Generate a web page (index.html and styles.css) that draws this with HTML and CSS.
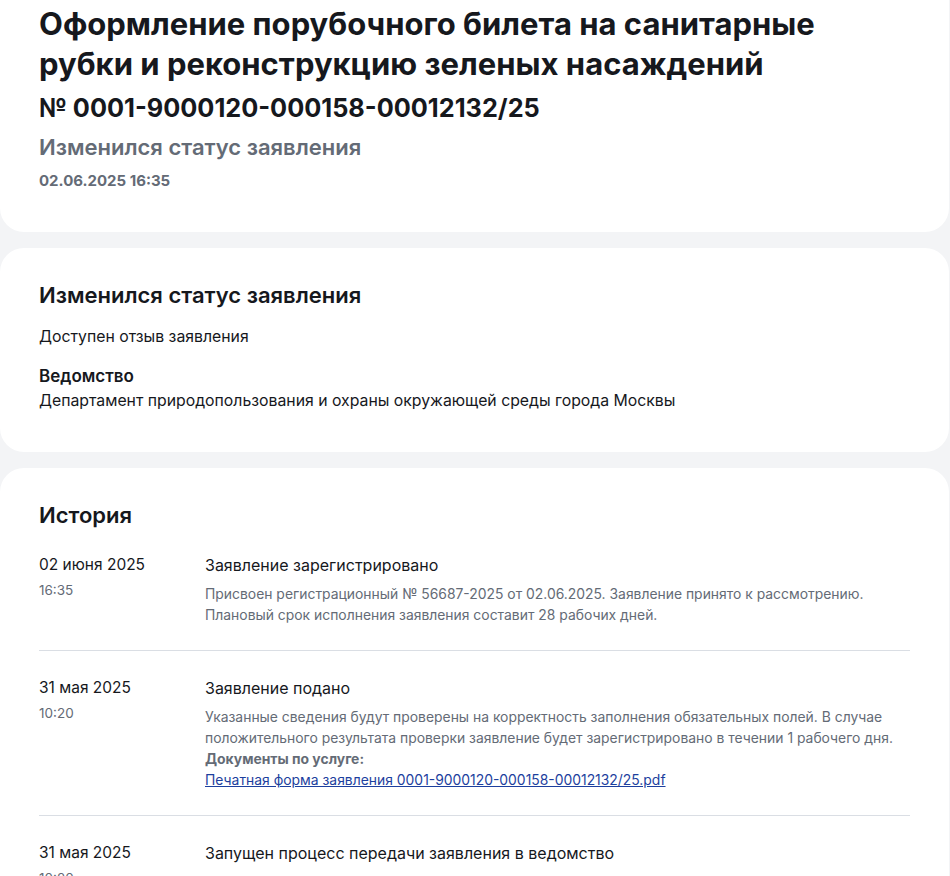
FILE: index.html
```html
<!DOCTYPE html>
<html lang="ru">
<head>
    <meta charset="UTF-8">
    <meta name="viewport" content="width=device-width, initial-scale=1.0">
    <title>Порубочный билет</title>
    <link rel="stylesheet" href="styles.css">
</head>
<body>
    <!-- Header card -->
    <section class="card card-head">
        <h1 class="title">Оформление порубочного билета на санитарные рубки и реконструкцию зеленых насаждений</h1>
        <div class="number">№ 0001-9000120-000158-00012132/25</div>
        <div class="status">Изменился статус заявления</div>
        <div class="stamp">02.06.2025 16:35</div>
    </section>

    <!-- Current status -->
    <section class="card card-status">
        <h2 class="card-title">Изменился статус заявления</h2>
        <p class="text">Доступен отзыв заявления</p>
        <div class="label">Ведомство</div>
        <p class="text">Департамент природопользования и охраны окружающей среды города Москвы</p>
    </section>

    <!-- History -->
    <section class="card card-history">
        <h2 class="card-title">История</h2>

        <div class="event">
            <div class="when">
                <div class="date">02 июня 2025</div>
                <div class="time">16:35</div>
            </div>
            <div class="what">
                <div class="event-title">Заявление зарегистрировано</div>
                <p class="desc">Присвоен регистрационный № 56687-2025 от 02.06.2025. Заявление принято к рассмотрению.<br>Плановый срок исполнения заявления составит 28 рабочих дней.</p>
            </div>
        </div>

        <div class="event">
            <div class="when">
                <div class="date">31 мая 2025</div>
                <div class="time">10:20</div>
            </div>
            <div class="what">
                <div class="event-title">Заявление подано</div>
                <p class="desc">Указанные сведения будут проверены на корректность заполнения обязательных полей. В случае положительного результата проверки заявление будет зарегистрировано в течении 1 рабочего дня.<br><strong>Документы по услуге:</strong><br><a href="#">Печатная форма заявления 0001-9000120-000158-00012132/25.pdf</a></p>
            </div>
        </div>

        <div class="event">
            <div class="when">
                <div class="date">31 мая 2025</div>
                <div class="time">10:20</div>
            </div>
            <div class="what">
                <div class="event-title">Запущен процесс передачи заявления в ведомство</div>
            </div>
        </div>
    </section>
</body>
</html>
```

FILE: styles.css
```css
body {
    margin: 0;
    background: #f3f4f6;
    font-family: Inter, "Noto Sans", sans-serif;
    color: #16181d;
    padding-right: 1px;
}
.card {
    background: #fff;
    border-radius: 0 0 24px 24px;
    padding: 40px 39px;
    margin-bottom: 16px;
}
.card + .card {
    border-radius: 24px;
}
.card-head {
    padding-top: 4px;
    padding-bottom: 40px;
}
.title {
    margin: 0;
    font-size: 31px;
    line-height: 40px;
    font-weight: 700;
    max-width: 800px;
}
.number {
    font-size: 25.3px;
    line-height: 36px;
    font-weight: 700;
    margin-top: 6px;
}
.status {
    font-size: 22px;
    line-height: 30px;
    font-weight: 600;
    color: #646b76;
    margin-top: 6px;
}
.stamp {
    font-size: 15px;
    line-height: 22px;
    font-weight: 700;
    color: #646b76;
    margin-top: 8px;
}
.card-status {
    padding-top: 32px;
    padding-bottom: 40px;
}
.card-title {
    margin: 0 0 16px;
    font-size: 22px;
    line-height: 30px;
    font-weight: 600;
}
.text {
    margin: 0;
    font-size: 15.8px;
    line-height: 22px;
}
.label {
    font-size: 17px;
    line-height: 24px;
    font-weight: 600;
    margin: 16px 0 2px;
}
.card-history {
    padding-top: 32px;
}
.card-history .card-title {
    margin-bottom: 24px;
}
.event {
    display: flex;
    padding: 0 0 24px;
    border-bottom: 1px solid #dadee4;
}
.event + .event {
    padding-top: 26px;
}
.event:last-child {
    border-bottom: none;
}
.when {
    width: 166px;
    flex-shrink: 0;
}
.date {
    font-size: 15.5px;
    line-height: 22px;
}
.event-title {
    font-size: 16px;
    line-height: 22px;
}
.time {
    font-size: 13.5px;
    line-height: 20px;
    color: #646b76;
    margin-top: 4px;
}
.what {
    flex: 1;
}
.desc {
    margin: 8px 0 0;
    font-size: 13.9px;
    line-height: 21px;
    color: #646b76;
}
.desc strong {
    font-weight: 700;
}
.desc a {
    color: #1d3f9e;
}
```
